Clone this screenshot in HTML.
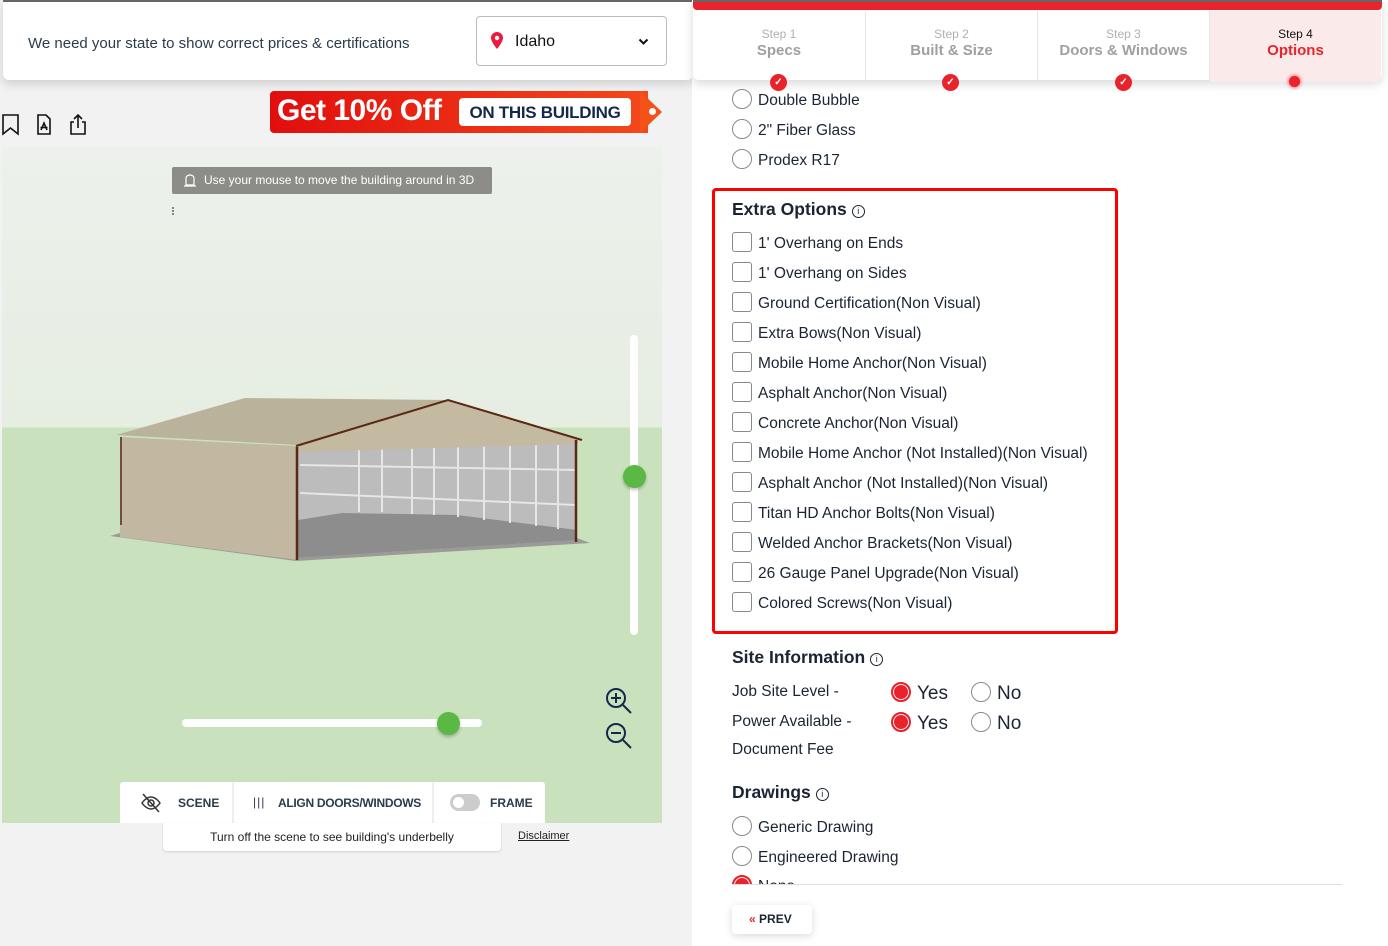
<!DOCTYPE html>
<html><head><meta charset="utf-8"><style>
*{box-sizing:border-box;margin:0;padding:0}
body{width:1388px;height:946px;overflow:hidden;background:#f2f2f2;font-family:"Liberation Sans",sans-serif;position:relative;color:#1b2433}
.abs{position:absolute}
.hdr{left:3px;top:0;width:690px;height:80px;background:#fff;border-radius:0 0 6px 6px;box-shadow:0 4px 10px rgba(0,0,0,.15);border-top:2px solid #666}
.right{left:692px;top:0;width:696px;height:946px;background:#fff}
.steps{left:693px;top:0;width:689px;height:80px;background:#fff;border-radius:0 0 6px 6px;box-shadow:0 4px 10px rgba(0,0,0,.15);border-top:2px solid #666}
.step{position:absolute;top:9px;height:71px;width:172px;text-align:center;border-left:1px solid #e4e4e4}
.step .s{font-size:12px;color:#b0b0b0;margin-top:16px}
.step .t{font-size:15px;color:#a0a0a0;margin-top:1px;font-weight:bold}
.chk{position:absolute;width:17px;height:17px;border-radius:50%;background:#e8232b;top:72px;color:#fff;font-size:10px;text-align:center;line-height:17px;font-weight:bold}
.row{position:absolute;left:732px;font-size:15.5px;color:#1b2433;height:20px;line-height:20px}
.row i{display:inline-block;vertical-align:middle;margin-right:6px;width:20px;height:20px;border:1px solid #8a8a8a;border-radius:3px;margin-top:-3px}
.row i.r{border-radius:50%}
.row i.on{border:2px solid #e8232b;background:#e8232b;box-shadow:inset 0 0 0 1px #fff}
h3{position:absolute;left:732px;font-size:17.5px;font-weight:bold;color:#1b2433}
.info{display:inline-block;width:13px;height:13px;border:1.3px solid #1b2433;border-radius:50%;font-size:9px;line-height:11px;text-align:center;font-weight:normal;vertical-align:1px;margin-left:5px}
</style></head><body>
<div class="abs hdr">
 <div class="abs" style="left:25px;top:33px;font-size:15px;color:#2b3b4c">We need your state to show correct prices &amp; certifications</div>
 <div class="abs" style="left:473px;top:14px;width:191px;height:50px;border:1px solid #bbb;border-radius:4px">
  <svg class="abs" style="left:14px;top:15px" width="12" height="17" viewBox="0 0 12 17"><path d="M6 0C2.7 0 0 2.6 0 5.9 0 10 6 17 6 17s6-7 6-11.1C12 2.6 9.3 0 6 0z" fill="#f0183f"/><circle cx="6" cy="6" r="2.2" fill="#fff"/></svg>
  <div class="abs" style="left:38px;top:16px;font-size:16px;color:#111">Idaho</div>
  <svg class="abs" style="left:161px;top:21px" width="11" height="8" viewBox="0 0 11 8"><path d="M1.5 1.5l4 4 4-4" stroke="#111" stroke-width="2" fill="none"/></svg>
 </div>
</div>
<div class="abs right"></div>
<div class="abs steps">
 <div class="abs" style="left:0;top:0;width:689px;height:8px;background:#e8232b;border-radius:0 0 4px 4px"></div>
 <div class="step" style="left:0;border-left:none"><div class="s">Step 1</div><div class="t">Specs</div></div>
 <div class="step" style="left:172px"><div class="s">Step 2</div><div class="t">Built &amp; Size</div></div>
 <div class="step" style="left:344px"><div class="s">Step 3</div><div class="t">Doors &amp; Windows</div></div>
 <div class="step" style="left:516px;width:172px;background:#fbeaea"><div class="s" style="color:#111">Step 4</div><div class="t" style="color:#e8232b">Options</div></div>
 <div class="chk" style="left:77px">✓</div><div class="chk" style="left:249px">✓</div><div class="chk" style="left:422px">✓</div>
 <div class="chk" style="left:596px;top:74px;width:11px;height:11px;box-shadow:0 0 4px #e8232b"></div>
</div>
<svg class="abs" style="left:2px;top:114px" width="90" height="22" viewBox="0 0 90 22" fill="none" stroke="#111" stroke-width="1.6"><path d="M1 1h15v19l-7.5-6L1 20z"/><path d="M36 1h8l4 4v15H36z M39 16l3-7 3 7 M38.5 13.5h7"/><path d="M72 8h-3v12h14V8h-3 M76 14V1 M72 5l4-4 4 4"/></svg>
<div class="abs" style="left:270px;top:91px;width:378px;height:42px;background:linear-gradient(90deg,#e10e0e,#f4481a);border-radius:4px 0 0 4px"></div>
<div class="abs" style="left:640px;top:91px;width:0;height:0;border-top:21px solid transparent;border-bottom:21px solid transparent;border-left:22px solid #f5521a"></div>
<div class="abs" style="left:649px;top:108px;width:7px;height:7px;border-radius:50%;background:#fff"></div>
<div class="abs" style="left:277px;top:94px;font-size:30px;font-weight:bold;color:#fff;letter-spacing:-.5px">Get 10% Off</div>
<div class="abs" style="left:459px;top:98px;width:172px;height:28px;background:#fff;border-radius:4px;font-size:17px;font-weight:bold;color:#13294b;text-align:center;line-height:29px;letter-spacing:-.3px">ON THIS BUILDING</div>
<div class="abs" style="left:2px;top:147px;width:660px;height:676px;background:linear-gradient(#edf1ec 0,#e6ede1 280px,#c9e2bd 281px,#c9e2bd 100%)">
 <div class="abs" style="left:170px;top:20px;width:320px;height:27px;background:#8c8c88;border-radius:2px;color:#fff;font-size:12px;line-height:27px;padding-left:32px">Use your mouse to move the building around in 3D</div>
 <svg class="abs" style="left:180px;top:26px" width="16" height="16" viewBox="0 0 16 16" fill="none" stroke="#fff" stroke-width="1.2"><path d="M4 12V5a4 3 0 0 1 8 0v7z M2 13h12"/></svg>
 <div class="abs" style="left:170px;top:60px;width:2px;height:8px;border-left:2px dotted #888"></div>
 <svg class="abs" style="left:0;top:0" width="660" height="676" viewBox="0 147 660 676">
  <polygon points="108,536 294,561 588,543 575,538 296,553 118,533" fill="#9a9a96"/>
  <polygon points="296,445 446,401 575,440 575,540 294,558" fill="#bcbcbc"/>
  <polygon points="296,520 340,513 455,515 575,530 575,540 294,558" fill="#8d8d8d"/>
  <g stroke="#e6e6e6" stroke-width="2"><line x1="298" y1="465" x2="574" y2="470"/><line x1="298" y1="493" x2="574" y2="505"/><line x1="357" y1="448" x2="357" y2="512"/><line x1="380" y1="445" x2="380" y2="512"/><line x1="410" y1="445" x2="410" y2="514"/><line x1="432" y1="445" x2="432" y2="515"/><line x1="456" y1="445" x2="456" y2="517"/><line x1="482" y1="445" x2="482" y2="520"/><line x1="508" y1="445" x2="508" y2="523"/><line x1="534" y1="445" x2="534" y2="526"/><line x1="556" y1="445" x2="556" y2="529"/></g>
  <polygon points="296,445 446,401 576,438 576,444 296,452" fill="#c4b9a1"/>
  <polygon points="114,435 243,398 446,400 296,445" fill="#bbb29b"/>
  <polygon points="118,437 296,446 296,560 118,537" fill="#c2b8a2"/>
  <polyline points="294,446 446,400 580,440" stroke="#5a2814" stroke-width="2" fill="none"/>
  <line x1="295" y1="447" x2="295" y2="560" stroke="#5a2814" stroke-width="2.5"/>
  <line x1="574" y1="440" x2="574" y2="542" stroke="#5a2814" stroke-width="2.5"/>
  <line x1="119" y1="437" x2="119" y2="525" stroke="#5a2814" stroke-width="1.5"/>
 </svg>
 <div class="abs" style="left:628px;top:188px;width:8px;height:300px;background:#fff;border-radius:4px"></div>
 <div class="abs" style="left:621px;top:318px;width:23px;height:23px;border-radius:50%;background:#5bb845;box-shadow:0 2px 3px rgba(0,0,0,.25)"></div>
 <div class="abs" style="left:180px;top:572px;width:300px;height:8px;background:#fff;border-radius:4px"></div>
 <div class="abs" style="left:435px;top:565px;width:23px;height:23px;border-radius:50%;background:#5bb845;box-shadow:0 2px 3px rgba(0,0,0,.25)"></div>
 <svg class="abs" style="left:603px;top:540px" width="30" height="62" viewBox="0 0 30 62" fill="none" stroke="#13294b" stroke-width="2"><circle cx="11" cy="11" r="9"/><path d="M18 18l8 8 M6 11h10 M11 6v10"/><circle cx="11" cy="46" r="9"/><path d="M18 53l8 8 M6 46h10"/></svg>
 <div class="abs" style="left:118px;top:635px;width:425px;height:41px;background:#fff;border-radius:3px 3px 0 0;font-size:12px;font-weight:bold;color:#2b3b4c">
  <svg class="abs" style="left:20px;top:11px" width="22" height="20" viewBox="0 0 22 20" fill="none" stroke="#333" stroke-width="1.5"><path d="M2 10s4-6 9-6 9 6 9 6-4 6-9 6-9-6-9-6z"/><circle cx="11" cy="10" r="3"/><path d="M3 1l16 18"/></svg>
  <div class="abs" style="left:58px;top:14px">SCENE</div>
  <div class="abs" style="left:112px;top:0;width:2px;height:41px;background:#eee"></div>
  <div class="abs" style="left:133px;top:13px;letter-spacing:1px;font-weight:normal">|||</div>
  <div class="abs" style="left:158px;top:14px;letter-spacing:-.3px">ALIGN DOORS/WINDOWS</div>
  <div class="abs" style="left:312px;top:0;width:2px;height:41px;background:#eee"></div>
  <div class="abs" style="left:330px;top:12px;width:30px;height:17px;border-radius:9px;background:#ccc"></div>
  <div class="abs" style="left:333px;top:15px;width:11px;height:11px;border-radius:50%;background:#fff"></div>
  <div class="abs" style="left:370px;top:14px">FRAME</div>
 </div>
</div>
<div class="abs" style="left:163px;top:823px;width:338px;height:28px;background:#fff;border-radius:0 0 4px 4px;box-shadow:0 1px 2px rgba(0,0,0,.15);font-size:12px;text-align:center;line-height:28px;color:#222">Turn off the scene to see building's underbelly</div>
<div class="abs" style="left:518px;top:830px;font-size:11px;text-decoration:underline;color:#222">Disclaimer</div>
<div class="row" style="top:91px"><i class="r"></i>Double Bubble</div>
<div class="row" style="top:121px"><i class="r"></i>2" Fiber Glass</div>
<div class="row" style="top:151px"><i class="r"></i>Prodex R17</div>
<div class="abs" style="left:712px;top:188px;width:406px;height:446px;border:3px solid #f00;border-radius:4px"></div>
<h3 style="top:199px">Extra Options<span class="info">i</span></h3>
<div class="row" style="top:234px"><i></i>1' Overhang on Ends</div>
<div class="row" style="top:264px"><i></i>1' Overhang on Sides</div>
<div class="row" style="top:294px"><i></i>Ground Certification(Non Visual)</div>
<div class="row" style="top:324px"><i></i>Extra Bows(Non Visual)</div>
<div class="row" style="top:354px"><i></i>Mobile Home Anchor(Non Visual)</div>
<div class="row" style="top:384px"><i></i>Asphalt Anchor(Non Visual)</div>
<div class="row" style="top:414px"><i></i>Concrete Anchor(Non Visual)</div>
<div class="row" style="top:444px"><i></i>Mobile Home Anchor (Not Installed)(Non Visual)</div>
<div class="row" style="top:474px"><i></i>Asphalt Anchor (Not Installed)(Non Visual)</div>
<div class="row" style="top:504px"><i></i>Titan HD Anchor Bolts(Non Visual)</div>
<div class="row" style="top:534px"><i></i>Welded Anchor Brackets(Non Visual)</div>
<div class="row" style="top:564px"><i></i>26 Gauge Panel Upgrade(Non Visual)</div>
<div class="row" style="top:594px"><i></i>Colored Screws(Non Visual)</div>
<h3 style="top:647px">Site Information<span class="info">i</span></h3>
<div class="row" style="top:682px">Job Site Level -</div>
<div class="row" style="top:712px">Power Available -</div>
<div class="row" style="top:740px">Document Fee</div>
<div class="row" style="left:891px;top:684px;font-size:19px"><i class="r on"></i>Yes</div>
<div class="row" style="left:971px;top:684px;font-size:19px"><i class="r"></i>No</div>
<div class="row" style="left:891px;top:714px;font-size:19px"><i class="r on"></i>Yes</div>
<div class="row" style="left:971px;top:714px;font-size:19px"><i class="r"></i>No</div>
<h3 style="top:782px">Drawings<span class="info">i</span></h3>
<div class="row" style="top:818px"><i class="r"></i>Generic Drawing</div>
<div class="row" style="top:848px"><i class="r"></i>Engineered Drawing</div>
<div class="abs" style="left:730px;top:874px;width:640px;height:10px;overflow:hidden"><div class="row" style="left:2px;top:3px"><i class="r on"></i>None</div></div>
<div class="abs" style="left:732px;top:884px;width:610px;height:1px;background:#ddd"></div>
<div class="abs" style="left:732px;top:905px;width:80px;height:29px;background:#fff;border-radius:4px;box-shadow:0 2px 8px rgba(0,0,0,.15);font-size:12px;font-weight:bold;line-height:29px;padding-left:17px"><span style="color:#e8232b">«</span> PREV</div>
</body></html>
